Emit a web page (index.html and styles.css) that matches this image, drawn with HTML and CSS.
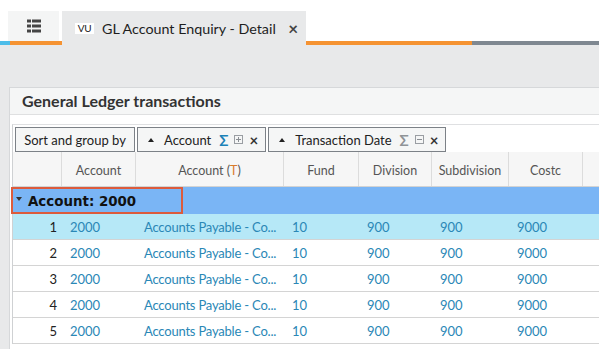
FILE: index.html
```html
<!DOCTYPE html>
<html lang="en">
<head>
<meta charset="utf-8">
<title>GL Account Enquiry - Detail</title>
<link rel="stylesheet" href="styles.css">
</head>
<body>
<div class="app">
  <header class="topbar">
    <div class="menu-slot">
      <div class="menu-tab">
        <svg class="menu-icon" width="14" height="14" viewBox="0 0 14 14" aria-hidden="true">
          <rect x="0" y="0.5" width="4" height="3" fill="#454545"/>
          <rect x="5" y="0.5" width="9" height="3" fill="#454545"/>
          <rect x="0" y="5.5" width="4" height="3" fill="#454545"/>
          <rect x="5" y="5.5" width="9" height="3" fill="#454545"/>
          <rect x="0" y="10.5" width="4" height="3" fill="#454545"/>
          <rect x="5" y="10.5" width="9" height="3" fill="#454545"/>
        </svg>
      </div>
      <div class="stripe stripe-left"></div>
    </div>
    <div class="tab">
      <span class="badge">VU</span>
      <span class="tab-title">GL Account Enquiry - Detail</span>
      <span class="tab-close">×</span>
    </div>
    <div class="rest"><div class="stripe stripe-right"></div></div>
  </header>

  <main class="workspace">
    <section class="panel">
      <h2 class="panel-title">General Ledger transactions</h2>
      <div class="panel-body">
        <div class="grid">
          <div class="groupbar">
            <div class="chip chip-plain">Sort and group by</div>
            <div class="chip">
              <span class="tri-up"></span>
              <span class="chip-label">Account</span>
              <span class="sigma sigma-on">Σ</span>
              <svg class="boxicon" width="9" height="9" viewBox="0 0 9 9"><rect x="0.5" y="0.5" width="8" height="8" fill="none" stroke="#9a9ea3"/><path d="M2 4.5h5M4.5 2v5" stroke="#8a8e93"/></svg>
              <span class="chip-x">×</span>
            </div>
            <div class="chip">
              <span class="tri-up"></span>
              <span class="chip-label">Transaction Date</span>
              <span class="sigma">Σ</span>
              <svg class="boxicon" width="9" height="9" viewBox="0 0 9 9"><rect x="0.5" y="0.5" width="8" height="8" fill="none" stroke="#9a9ea3"/><path d="M2 4.5h5" stroke="#8a8e93"/></svg>
              <span class="chip-x">×</span>
            </div>
          </div>

          <div class="row thead">
            <div class="cell"></div>
            <div class="cell">Account</div>
            <div class="cell">Account (<span class="t">T</span>)</div>
            <div class="cell">Fund</div>
            <div class="cell">Division</div>
            <div class="cell">Subdivision</div>
            <div class="cell">Costc</div>
            <div class="cell"></div>
          </div>

          <div class="group-row">
            <span class="tri-down"></span>
            <span class="group-label">Account: 2000</span>
            <div class="highlight"></div>
          </div>

          <div class="row drow selected">
            <div class="cell num">1</div><div class="cell">2000</div><div class="cell desc">Accounts Payable - Co...</div><div class="cell">10</div><div class="cell">900</div><div class="cell">900</div><div class="cell">9000</div><div class="cell"></div>
          </div>
          <div class="row drow">
            <div class="cell num">2</div><div class="cell">2000</div><div class="cell desc">Accounts Payable - Co...</div><div class="cell">10</div><div class="cell">900</div><div class="cell">900</div><div class="cell">9000</div><div class="cell"></div>
          </div>
          <div class="row drow">
            <div class="cell num">3</div><div class="cell">2000</div><div class="cell desc">Accounts Payable - Co...</div><div class="cell">10</div><div class="cell">900</div><div class="cell">900</div><div class="cell">9000</div><div class="cell"></div>
          </div>
          <div class="row drow">
            <div class="cell num">4</div><div class="cell">2000</div><div class="cell desc">Accounts Payable - Co...</div><div class="cell">10</div><div class="cell">900</div><div class="cell">900</div><div class="cell">9000</div><div class="cell"></div>
          </div>
          <div class="row drow">
            <div class="cell num">5</div><div class="cell">2000</div><div class="cell desc">Accounts Payable - Co...</div><div class="cell">10</div><div class="cell">900</div><div class="cell">900</div><div class="cell">9000</div><div class="cell"></div>
          </div>
        </div>
      </div>
    </section>
  </main>
</div>
</body>
</html>
```

FILE: styles.css
```css
* { box-sizing: border-box; }

html, body {
  margin: 0;
  padding: 0;
}

body {
  width: 599px;
  height: 349px;
  overflow: hidden;
  background: #e8e9ea;
  font-family: Lato, "Open Sans", Arial, sans-serif;
  color: #333;
}

.app {
  width: 599px;
  height: 349px;
  overflow: hidden;
}

/* ---------- top bar ---------- */
.topbar {
  display: flex;
  align-items: flex-end;
  height: 45px;
  background: #ffffff;
}

.menu-slot {
  width: 62px;
  display: flex;
  flex-direction: column;
}

.menu-tab {
  margin-left: 8px;
  width: 51px;
  height: 30px;
  background: #f4f5f5;
  display: flex;
  align-items: center;
  justify-content: center;
}

.stripe {
  height: 4px;
}

.stripe-left {
  background: linear-gradient(90deg, #4dbde9 0 10px, #f59332 10px);
}

.tab {
  width: 244px;
  height: 34px;
  background: #e8e9ea;
  display: flex;
  align-items: center;
  padding-left: 13px;
}

.badge {
  width: 19px;
  height: 11px;
  background: #fff;
  font-size: 10px;
  line-height: 11px;
  text-align: center;
  color: #222;
  letter-spacing: -0.3px;
}

.tab-title {
  margin-left: 8px;
  font-size: 14.3px;
  color: #1e1e1e;
  white-space: nowrap;
}

.tab-close {
  margin-left: auto;
  margin-right: 8px;
  font-size: 17px;
  font-weight: bold;
  color: #444;
}

.rest {
  flex: 1;
}

.stripe-right {
  background: linear-gradient(90deg, #f59332 0 166px, #7f8891 166px);
}

/* ---------- workspace ---------- */
.workspace {
  padding: 42px 0 0 9px;
}

.panel {
  width: 640px;
  height: 300px;
  border: 1px solid #d6d8da;
  border-right: none;
  background: #fff;
}

.panel-title {
  margin: 0;
  height: 27px;
  line-height: 25px;
  padding-left: 12px;
  background: #f5f6f6;
  border-bottom: 1px solid #dfe0e1;
  font-size: 16px;
  font-weight: bold;
  color: #333;
}

.panel-body {
  padding: 9px 0 0 2px;
}

.grid {
  border-left: 1px solid #cfd1d3;
  border-top: 1px solid #dfe0e2;
}

.groupbar {
  display: flex;
  gap: 2px;
  height: 27px;
  padding: 2px 0 0 2px;
}

.chip {
  height: 25px;
  display: flex;
  align-items: center;
  background: #f5f6f6;
  border: 1px solid #7c8187;
  padding: 0 7px 0 10px;
  font-size: 13px;
  color: #222;
}

.chip-plain {
  width: 120px;
  justify-content: center;
  padding: 0;
}

.tri-up {
  width: 0;
  height: 0;
  border-left: 3.5px solid transparent;
  border-right: 3.5px solid transparent;
  border-bottom: 4px solid #222;
  margin-right: 10px;
}

.chip-label {
  margin-right: 8px;
}

.sigma {
  font-size: 15px;
  font-weight: bold;
  color: #8f9397;
  margin-right: 6px;
}

.sigma-on {
  color: #1c82b8;
}

.boxicon {
  margin-right: 6px;
}

.chip-x {
  font-size: 15px;
  font-weight: bold;
  color: #333;
}

/* ---------- table ---------- */
.row {
  display: grid;
  grid-template-columns: 49px 74px 148px 75px 73px 77px 74px 100px;
}

.thead {
  height: 35px;
  background: #f6f6f6;
  border-bottom: 1px solid #d3d3d3;
}

.thead .cell {
  display: flex;
  align-items: center;
  justify-content: center;
  border-right: 1px solid #dcdcdc;
  font-size: 12.5px;
  color: #555;
  padding-top: 2px;
}

.t {
  color: #d97b2b;
}

.group-row {
  position: relative;
  height: 27px;
  background: #7ab5f5;
  display: flex;
  align-items: center;
}

.tri-down {
  width: 0;
  height: 0;
  margin-left: 3px;
  border-left: 3px solid transparent;
  border-right: 3px solid transparent;
  border-top: 4px solid #333;
  margin-top: -4px;
}

.group-label {
  margin-left: 6px;
  font-family: "DejaVu Sans", Verdana, sans-serif;
  font-size: 13.4px;
  font-weight: bold;
  color: #111;
  padding-top: 1px;
}

.highlight {
  position: absolute;
  left: -2px;
  top: 0;
  width: 172px;
  height: 27px;
  border: 2px solid #dc5b3c;
}

.drow {
  height: 26px;
  border-bottom: 1px solid #d4d4d4;
  font-size: 13px;
  color: #2a87b6;
}

.drow .cell {
  display: flex;
  align-items: center;
  padding-left: 8px;
  white-space: nowrap;
}

.drow .cell.desc {
  letter-spacing: -0.2px;
}

.drow .cell.num {
  justify-content: flex-end;
  padding-left: 0;
  padding-right: 5px;
  color: #222;
}

.selected {
  background: #b6e8f7;
}
```
